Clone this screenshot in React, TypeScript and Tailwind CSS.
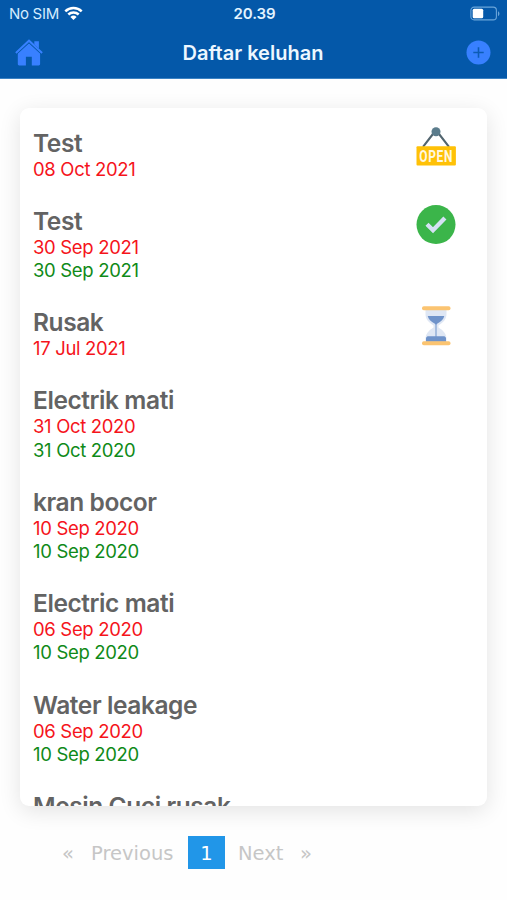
import type { ReactNode } from 'react'

type Status = 'open' | 'done' | 'waiting'

interface Complaint {
  title: string
  reported?: string
  resolved?: string
  status?: Status
}

const complaints: Complaint[] = [
  { title: 'Test', reported: '08 Oct 2021', status: 'open' },
  { title: 'Test', reported: '30 Sep 2021', resolved: '30 Sep 2021', status: 'done' },
  { title: 'Rusak', reported: '17 Jul 2021', status: 'waiting' },
  { title: 'Electrik mati', reported: '31 Oct 2020', resolved: '31 Oct 2020' },
  { title: 'kran bocor', reported: '10 Sep 2020', resolved: '10 Sep 2020' },
  { title: 'Electric mati', reported: '06 Sep 2020', resolved: '10 Sep 2020' },
  { title: 'Water leakage', reported: '06 Sep 2020', resolved: '10 Sep 2020' },
  { title: 'Mesin Cuci rusak' },
]

function OpenIcon() {
  return (
    <svg className="h-10 w-10" viewBox="0 0 40 40" fill="none">
      <path d="M7 19.800 18.500 5M33 19.800 21.500 5" stroke="#52656f" strokeWidth="2.100" />
      <circle cx="20" cy="4.800" r="4.500" fill="#5b7c8c" />
      <rect x="0.500" y="19.200" width="39.400" height="19.400" rx="1" fill="#ffc107" />
      <text
        x="20.200"
        y="34.500"
        textAnchor="middle"
        textLength="34"
        lengthAdjust="spacingAndGlyphs"
        className="fill-[#fff8e1] font-['Roboto',sans-serif] text-[16px] leading-4 font-bold tracking-[1px]"
      >
        OPEN
      </text>
    </svg>
  )
}

function DoneIcon() {
  return (
    <svg className="h-10 w-10" viewBox="0 0 40 40" fill="none">
      <circle cx="20" cy="19.600" r="19.500" fill="#3bb54a" />
      <path d="M11 19.300 17 25.300 28.900 12.900" stroke="#d4e1f4" strokeWidth="4.300" />
    </svg>
  )
}

function WaitingIcon() {
  return (
    <svg className="h-10 w-10" viewBox="0 0 40 40" fill="none">
      <path
        d="M9.500 3.500h21v4.600c0 5-3 8.500-8 11.400v2c5 3 8 6.500 8 11.500v4h-21v-4c0-5 3-8.500 8-11.500v-2c-5-2.900-8-6.400-8-11.400z"
        fill="#dfe7f4"
      />
      <path
        d="M11.700 10h16.600c-.7 3.300-3 5.600-7.200 7.700l-.6 1v11.500h8l1.500 1.500v4H10v-4l1.500-1.500h8V18.700l-.6-1c-4.200-2.100-6.500-4.400-7.200-7.700z"
        fill="#6f93ca"
      />
      <rect x="6" y="0.300" width="28.500" height="4" rx="1.800" fill="#fbc471" />
      <rect x="6" y="35.300" width="28.500" height="4" rx="1.800" fill="#fbc471" />
    </svg>
  )
}

const statusIcons: Record<Status, ReactNode> = {
  open: <OpenIcon />,
  done: <DoneIcon />,
  waiting: <WaitingIcon />,
}

function StatusBar() {
  return (
    <div className="grid h-7 grid-cols-3 items-center pr-[7px] pl-[9px]">
      <div className="flex items-center gap-[5px] text-[15px] tracking-[-0.3px] text-[#d5ecff]">
        <span className="whitespace-nowrap">No SIM</span>
        <svg className="-mt-[2px] h-[15px] w-[19px]" viewBox="0 0 19 15" fill="none">
          <path d="M1.300 5.400a11.700 11.700 0 0 1 16.400 0M4.300 8.500a7.500 7.500 0 0 1 10.400 0" stroke="#fff" strokeWidth="2.500" />
          <path d="M6.400 10.900a4.500 4.500 0 0 1 6.200 0L9.500 14z" fill="#fff" />
        </svg>
      </div>
      <span className="text-center text-[15px] font-semibold tracking-[-0.1px] text-[#e3f3ff]">20.39</span>
      <svg className="-mt-[2px] h-[15px] w-[31px] justify-self-end" viewBox="0 0 31 15" fill="none">
        <rect x="1.900" y="1.100" width="25.500" height="12.800" rx="3.200" stroke="#6aa5da" strokeWidth="1.100" />
        <rect x="3.700" y="2.700" width="10.500" height="9.600" rx="1.500" fill="#fff" />
        <path d="M29 5.200c1.900.8 1.900 4 0 4.800z" fill="#6aa5da" />
      </svg>
    </div>
  )
}

function Header() {
  return (
    <header className="h-[79px] border-b border-[#3b82c4] bg-[#0458a9]">
      <StatusBar />
      <div className="grid h-[49px] grid-cols-[1fr_auto_1fr] items-center pr-4 pl-[15px]">
        <button type="button" aria-label="Home" className="w-7">
          <svg className="h-7 w-7" viewBox="0 0 28 28" fill="#3880ff">
            <path d="M19.300 2.200h4.600v9.200l-4.600-4.200z" />
            <path d="M14 4.300 2.800 14.500v10.500c0 .9.500 1.400 1.400 1.400h6.700v-8.600h5.900v8.600h6.900c.9 0 1.400-.5 1.400-1.400V14.500z" />
            <path d="M1 14.300 14 2.200l13 12.100" fill="none" stroke="#0458a9" strokeWidth="2.600" />
            <path d="M.9 13.900 14 1.700l13.100 12.200" fill="none" stroke="#3880ff" strokeWidth="2" />
          </svg>
        </button>
        <h1 className="text-[20px] leading-6 font-semibold text-[#edf7ff]">Daftar keluhan</h1>
        <button type="button" aria-label="Add" className="justify-self-end">
          <svg className="h-[25px] w-[25px]" viewBox="0 0 25 25" fill="none">
            <circle cx="12.500" cy="12.500" r="12" fill="#3880ff" />
            <path d="M12.500 7.300v10.400M7.300 12.500h10.400" stroke="#0c5cb5" strokeWidth="1.600" />
          </svg>
        </button>
      </div>
    </header>
  )
}

function ComplaintRow({ title, reported, resolved, status }: Complaint) {
  return (
    <li className="flex items-start justify-between pb-[24.75px]">
      <div>
        <h2 className="text-[24.5px] leading-[30px] font-semibold tracking-[-0.42px] text-[#636363]">{title}</h2>
        {reported && <p className="text-[18.5px] leading-[23.35px] tracking-[-0.33px] text-[#f5141b]">{reported}</p>}
        {resolved && <p className="text-[18.5px] leading-[23.35px] tracking-[-0.33px] text-[#0f8a18]">{resolved}</p>}
      </div>
      {status && <div className="-mt-px">{statusIcons[status]}</div>}
    </li>
  )
}

function Pagination() {
  return (
    <nav className="mt-[30px] flex h-[33px] items-center pl-[62px] font-['DejaVu_Sans',sans-serif] text-[19.5px] leading-6 text-[#c6c6c6]">
      <span className="mt-0.5 w-7">«</span>
      <span className="mt-0.5 w-[98px] pl-px">Previous</span>
      <span className="flex h-[33px] w-[37px] items-center justify-center bg-[#2196e8] pt-0.5 text-white">1</span>
      <span className="mt-0.5 ml-[13px] w-[62px]">Next</span>
      <span className="mt-0.5">»</span>
    </nav>
  )
}

export default function App() {
  return (
    <div className="h-[900px] w-full overflow-hidden bg-[#fefefe] font-['Inter',sans-serif]">
      <Header />
      <main>
        <div className="mx-5 mt-[29px] h-[698px] overflow-hidden rounded-[9px] bg-white pt-[19.6px] pr-[31px] pl-[13px] shadow-[0_5px_22px_rgba(0,0,0,0.11)]">
          <ul>
            {complaints.map((item, i) => (
              <ComplaintRow key={i} {...item} />
            ))}
          </ul>
        </div>
        <Pagination />
      </main>
    </div>
  )
}
